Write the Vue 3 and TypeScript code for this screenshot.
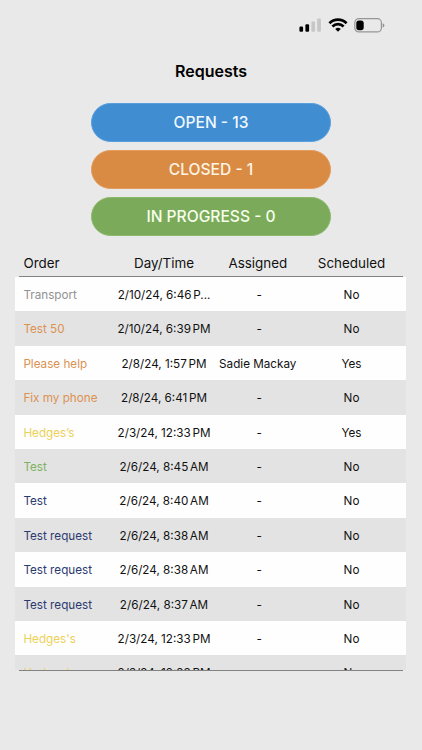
<script setup lang="ts">
interface RequestRow {
  order: string
  tone: string
  time: string
  period: string
  assigned?: string
  scheduled: string
}

const summaries = [
  { label: 'OPEN - 13', tone: 'open' },
  { label: 'CLOSED - 1', tone: 'closed' },
  { label: 'IN PROGRESS - 0', tone: 'progress' },
]

const columns = ['Order', 'Day/Time', 'Assigned', 'Scheduled']

const rows: RequestRow[] = [
  { order: 'Transport', tone: 'gray', time: '2/10/24, 6:46', period: 'P...', scheduled: 'No' },
  { order: 'Test 50', tone: 'orange', time: '2/10/24, 6:39', period: 'PM', scheduled: 'No' },
  { order: 'Please help', tone: 'orange', time: '2/8/24, 1:57', period: 'PM', assigned: 'Sadie Mackay', scheduled: 'Yes' },
  { order: 'Fix my phone', tone: 'orange', time: '2/8/24, 6:41', period: 'PM', scheduled: 'No' },
  { order: 'Hedges’s', tone: 'yellow', time: '2/3/24, 12:33', period: 'PM', scheduled: 'Yes' },
  { order: 'Test', tone: 'green', time: '2/6/24, 8:45', period: 'AM', scheduled: 'No' },
  { order: 'Test', tone: 'navy', time: '2/6/24, 8:40', period: 'AM', scheduled: 'No' },
  { order: 'Test request', tone: 'navy', time: '2/6/24, 8:38', period: 'AM', scheduled: 'No' },
  { order: 'Test request', tone: 'navy', time: '2/6/24, 8:38', period: 'AM', scheduled: 'No' },
  { order: 'Test request', tone: 'navy', time: '2/6/24, 8:37', period: 'AM', scheduled: 'No' },
  { order: "Hedges's", tone: 'yellow', time: '2/3/24, 12:33', period: 'PM', scheduled: 'No' },
  { order: "Hedges's", tone: 'yellow', time: '2/3/24, 12:33', period: 'PM', scheduled: 'No' },
]
</script>

<template>
  <main class="screen">
    <div class="status">
      <svg class="signal" width="22" height="14" viewBox="0 0 22 14">
        <rect x="0.4" y="8.6" width="3.7" height="5.2" rx="1.1" />
        <rect x="6.4" y="6.2" width="3.7" height="7.6" rx="1.1" />
        <rect class="dim" x="12.4" y="3.4" width="3.7" height="10.4" rx="1.1" />
        <rect class="dim" x="18.2" y="0.4" width="3.7" height="13.4" rx="1.1" />
      </svg>
      <svg class="wifi" width="20" height="14" viewBox="0 0 20 14">
        <path d="M1.4 5.2C6.3 0.3 13.7 0.3 18.6 5.2" />
        <path d="M4.4 8.5C7.6 5.3 12.4 5.3 15.6 8.5" />
        <path class="dot" d="M7.2 11Q10 8.6 12.8 11L10 13.8Z" />
      </svg>
      <svg class="battery" width="31" height="15" viewBox="0 0 31 15">
        <rect class="case" x="0.8" y="0.7" width="26.6" height="13.2" rx="4" />
        <rect x="2.3" y="2.4" width="7.4" height="9.9" rx="2.7" />
        <path class="tip" d="M28.6 5.2Q30.4 5.6 30.4 7.4T28.6 9.6Z" />
      </svg>
    </div>

    <h1 class="title">Requests</h1>

    <div class="summaries">
      <button v-for="item in summaries" :key="item.tone" class="pill" :class="item.tone">{{ item.label }}</button>
    </div>

    <section class="table">
      <div class="grid head">
        <span v-for="column in columns" :key="column">{{ column }}</span>
      </div>
      <div class="rule"></div>
      <div class="body">
        <div v-for="(row, index) in rows" :key="index" class="grid row">
          <span :class="row.tone">{{ row.order }}</span>
          <span>{{ row.time }}<span class="period">{{ row.period }}</span></span>
          <span :class="{ none: !row.assigned }">{{ row.assigned ?? '-' }}</span>
          <span>{{ row.scheduled }}</span>
        </div>
      </div>
      <div class="rule end"></div>
    </section>
  </main>
</template>

<style>
body {
  background: #e9e9e9;
}
</style>

<style scoped>
.screen {
  box-sizing: border-box;
  height: 750px;
  overflow: hidden;
  background: #e9e9e9;
  color: #111;
  font-family: Inter, "Liberation Sans", sans-serif;
}
.status {
  display: flex;
  box-sizing: border-box;
  height: 50px;
  padding: 18px 0 0 299px;
}
.signal { margin-right: 7px; }
.wifi { margin-right: 6px; }
.dim { fill: #c6c6c6; }
.wifi path {
  fill: none;
  stroke: #000;
  stroke-width: 2.7;
}
.wifi .dot {
  fill: #000;
  stroke: none;
}
.battery .case {
  fill: none;
  stroke: #969696;
  stroke-width: 1.2;
}
.battery .tip { fill: #969696; }
.title {
  margin: 10px 0 0;
  color: #000;
  font-size: 16px;
  font-weight: 600;
  line-height: 22px;
  text-align: center;
}
.summaries {
  display: flex;
  flex-direction: column;
  align-items: center;
  gap: 8px;
  padding-top: 21px;
}
.pill {
  box-sizing: border-box;
  width: 240.5px;
  height: 39px;
  padding: 0;
  border: 1px solid;
  border-radius: 20px;
  font: 500 15.6px/37px Inter, sans-serif;
}
.open {
  background: #408dd2;
  border-color: #589fdd;
  color: #f0f8ff;
}
.closed {
  background: #d98b43;
  border-color: #e59b5b;
  color: #fff5e4;
}
.progress {
  background: #7bab5a;
  border-color: #8bb96c;
  color: #f7ffec;
}
.table {
  width: 391px;
  margin: 17px 0 0 15.4px;
}
.grid {
  display: grid;
  grid-template-columns: repeat(4, 93.75px);
  padding: 0 8px;
  white-space: nowrap;
}
.grid > span {
  text-align: center;
}
.grid > span:first-child {
  text-align: left;
}
.head {
  height: 23px;
  font-size: 13.4px;
  line-height: 21px;
}
.rule {
  height: 1px;
  margin: 0 3.5px;
  background: #828282;
}
.body {
  height: 393px;
  overflow: hidden;
}
.row {
  height: 34.4px;
  font-size: 11.7px;
  line-height: 36px;
}
.row:nth-child(odd) { background: #fefefe; }
.row:nth-child(even) { background: #e3e3e3; }
.period { margin-left: 1.7px; }
.grid > .none { padding-left: 3px; }
.gray { color: #929292; }
.orange { color: #dc9252; }
.yellow { color: #ecd158; }
.green { color: #7fb260; }
.navy { color: #2b3a70; }
</style>
